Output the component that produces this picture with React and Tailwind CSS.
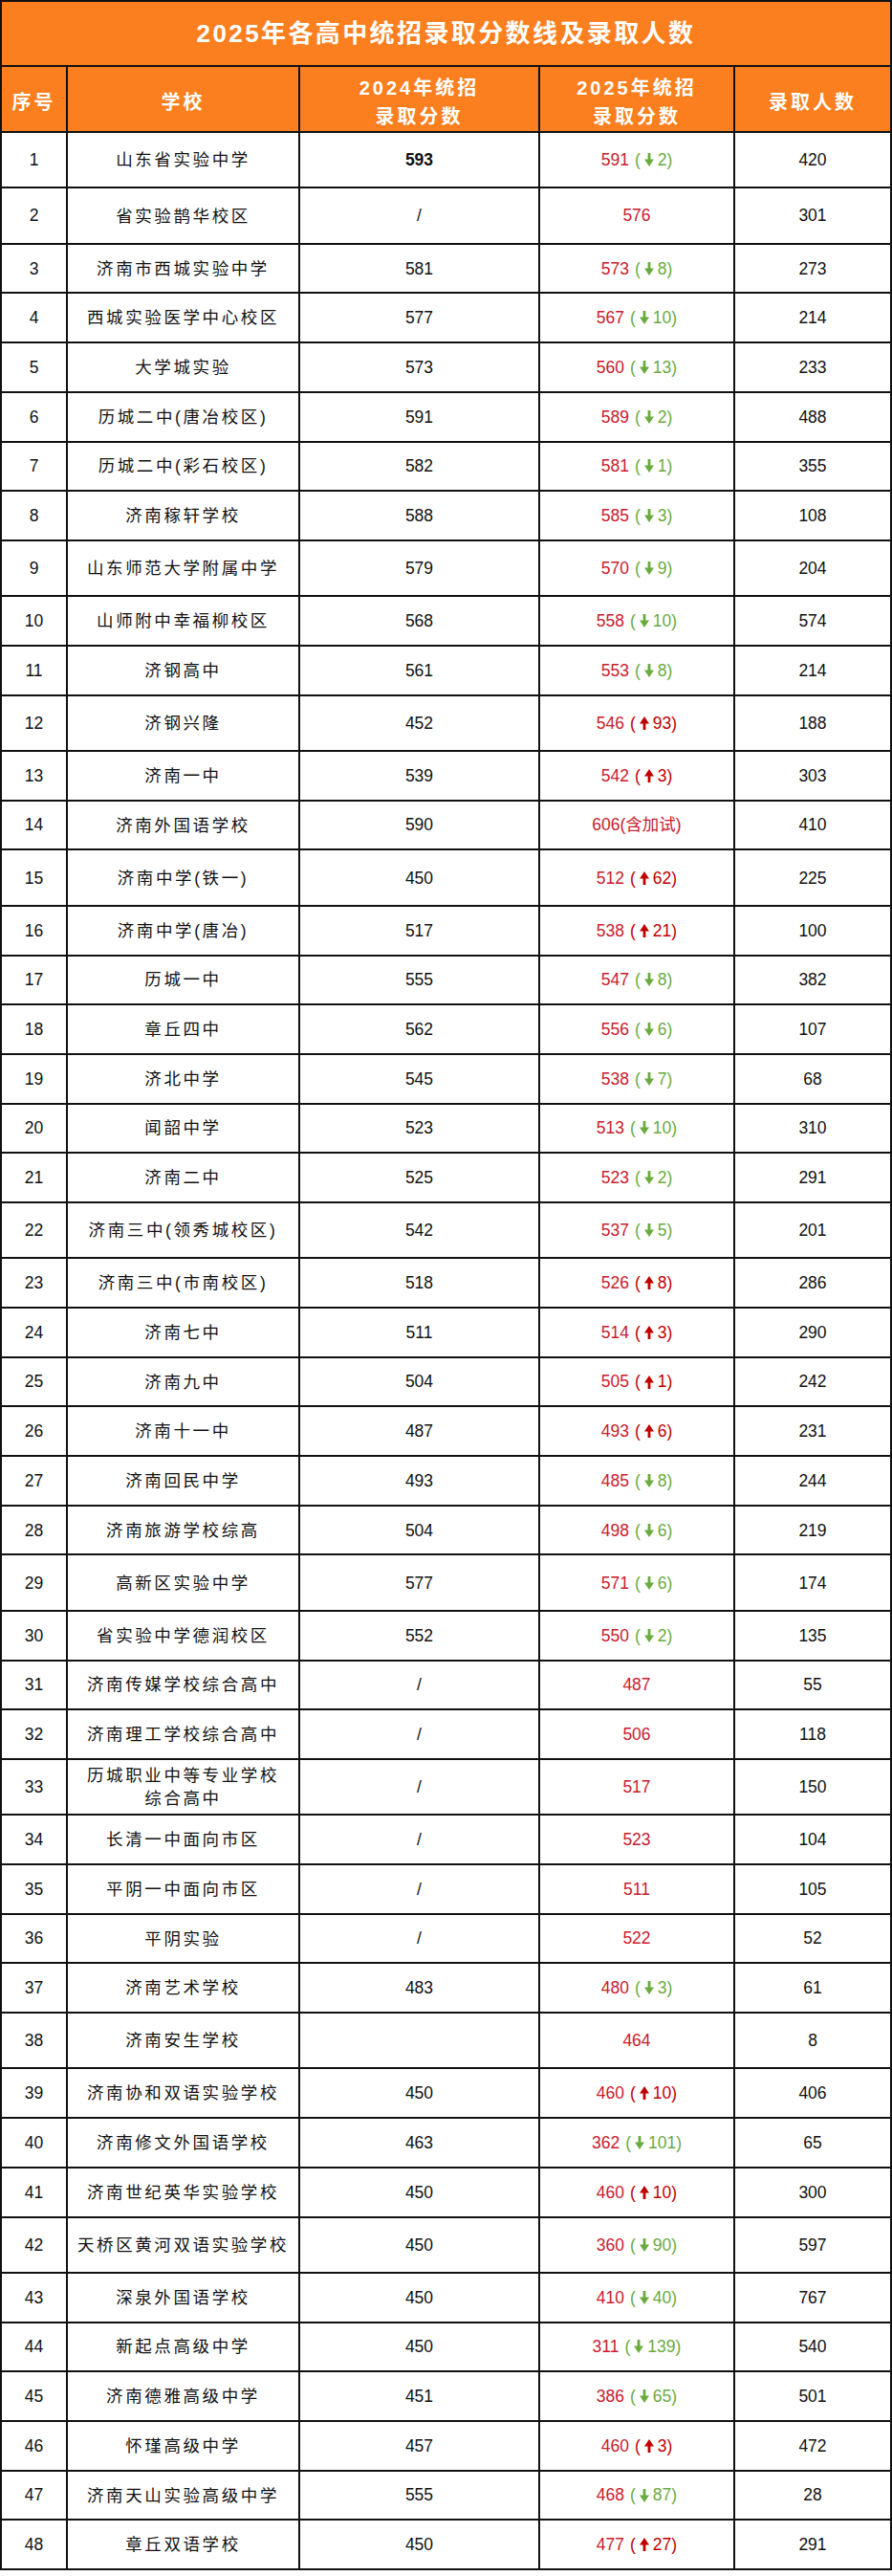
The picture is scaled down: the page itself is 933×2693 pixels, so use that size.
const rows = [
  [1, "山东省实验中学", "593", "591", ["down", "2"], "420"],
  [2, "省实验鹊华校区", "/", "576", null, "301"],
  [3, "济南市西城实验中学", "581", "573", ["down", "8"], "273"],
  [4, "西城实验医学中心校区", "577", "567", ["down", "10"], "214"],
  [5, "大学城实验", "573", "560", ["down", "13"], "233"],
  [6, "历城二中(唐冶校区)", "591", "589", ["down", "2"], "488"],
  [7, "历城二中(彩石校区)", "582", "581", ["down", "1"], "355"],
  [8, "济南稼轩学校", "588", "585", ["down", "3"], "108"],
  [9, "山东师范大学附属中学", "579", "570", ["down", "9"], "204"],
  [10, "山师附中幸福柳校区", "568", "558", ["down", "10"], "574"],
  [11, "济钢高中", "561", "553", ["down", "8"], "214"],
  [12, "济钢兴隆", "452", "546", ["up", "93"], "188"],
  [13, "济南一中", "539", "542", ["up", "3"], "303"],
  [14, "济南外国语学校", "590", "606", ["text", "(含加试)"], "410"],
  [15, "济南中学(铁一)", "450", "512", ["up", "62"], "225"],
  [16, "济南中学(唐冶)", "517", "538", ["up", "21"], "100"],
  [17, "历城一中", "555", "547", ["down", "8"], "382"],
  [18, "章丘四中", "562", "556", ["down", "6"], "107"],
  [19, "济北中学", "545", "538", ["down", "7"], "68"],
  [20, "闻韶中学", "523", "513", ["down", "10"], "310"],
  [21, "济南二中", "525", "523", ["down", "2"], "291"],
  [22, "济南三中(领秀城校区)", "542", "537", ["down", "5"], "201"],
  [23, "济南三中(市南校区)", "518", "526", ["up", "8"], "286"],
  [24, "济南七中", "511", "514", ["up", "3"], "290"],
  [25, "济南九中", "504", "505", ["up", "1"], "242"],
  [26, "济南十一中", "487", "493", ["up", "6"], "231"],
  [27, "济南回民中学", "493", "485", ["down", "8"], "244"],
  [28, "济南旅游学校综高", "504", "498", ["down", "6"], "219"],
  [29, "高新区实验中学", "577", "571", ["down", "6"], "174"],
  [30, "省实验中学德润校区", "552", "550", ["down", "2"], "135"],
  [31, "济南传媒学校综合高中", "/", "487", null, "55"],
  [32, "济南理工学校综合高中", "/", "506", null, "118"],
  [33, "历城职业中等专业学校|综合高中", "/", "517", null, "150"],
  [34, "长清一中面向市区", "/", "523", null, "104"],
  [35, "平阴一中面向市区", "/", "511", null, "105"],
  [36, "平阴实验", "/", "522", null, "52"],
  [37, "济南艺术学校", "483", "480", ["down", "3"], "61"],
  [38, "济南安生学校", "", "464", null, "8"],
  [39, "济南协和双语实验学校", "450", "460", ["up", "10"], "406"],
  [40, "济南修文外国语学校", "463", "362", ["down", "101"], "65"],
  [41, "济南世纪英华实验学校", "450", "460", ["up", "10"], "300"],
  [42, "天桥区黄河双语实验学校", "450", "360", ["down", "90"], "597"],
  [43, "深泉外国语学校", "450", "410", ["down", "40"], "767"],
  [44, "新起点高级中学", "450", "311", ["down", "139"], "540"],
  [45, "济南德雅高级中学", "451", "386", ["down", "65"], "501"],
  [46, "怀瑾高级中学", "457", "460", ["up", "3"], "472"],
  [47, "济南天山实验高级中学", "555", "468", ["down", "87"], "28"],
  [48, "章丘双语学校", "450", "477", ["up", "27"], "291"],
];

// rows drawn a little taller in the source sheet
const tall = [1, 2, 9, 12, 15, 22, 29, 33, 38, 42];

const Arrow = ({ up }) => (
  <svg width="10" height="14" viewBox="0 0 10 14" className={up ? "rotate-180" : ""}>
    <rect x="3.6" y="0" width="2.8" height="8" fill="currentColor" />
    <polygon points="0,6.5 10,6.5 5,14" fill="currentColor" />
  </svg>
);

const Score = ({ value, delta }) => {
  if (!delta) return <span className="text-[#c8202e]">{value}</span>;
  if (delta[0] === "text")
    return (
      <span className="text-[#c8202e]">
        {value}
        {delta[1]}
      </span>
    );
  const up = delta[0] === "up";
  return (
    <span className="inline-flex items-center text-[#c8202e]">
      {value}
      <span className={`ml-[6px] inline-flex items-center ${up ? "text-[#c00000]" : "text-[#6aab3f]"}`}>
        (<span className="mx-[4px] inline-flex">
          <Arrow up={up} />
        </span>
        {delta[1]})
      </span>
    </span>
  );
};

const cell = "flex items-center justify-center border-r-2 border-b-2 border-[#111] text-center";

export default function App() {
  return (
    <div
      className="w-[933px] bg-white pb-[5px] text-[17.5px] text-[#111]"
      style={{ fontFamily: '"Liberation Sans", "Noto Sans CJK SC", sans-serif' }}
    >
      <div className="flex h-[70px] items-center justify-center border-2 border-[#111] bg-[#fb7f1f] text-[26px] font-bold tracking-[2.4px] text-white">
        2025年各高中统招录取分数线及录取人数
      </div>
      <div className="grid grid-cols-[69px_243px_251px_204px_164px] border-l-2 border-[#111]">
        {["序号", "学校", "2024年统招|录取分数", "2025年统招|录取分数", "录取人数"].map((h) => (
          <div
            key={h}
            className={`${cell} h-[69px] flex-col bg-[#fb7f1f] pt-[6px] text-[20px] font-semibold leading-[30px] tracking-[3px] text-white`}
          >
            {h.split("|").map((l) => (
              <span key={l}>{l}</span>
            ))}
          </div>
        ))}
        {rows.map(([no, name, y24, y25, delta, count]) => {
          const h = tall.includes(no) ? "h-[58.4px]" : "h-[51.7px]";
          return [
            <div key={no + "a"} className={`${cell} ${h}`}>
              {no}
            </div>,
            <div key={no + "b"} className={`${cell} ${h} flex-col leading-[24px] tracking-[2.6px]`}>
              {name.split("|").map((l) => (
                <span key={l}>{l}</span>
              ))}
            </div>,
            <div key={no + "c"} className={`${cell} ${h} ${no === 1 ? "font-bold" : ""}`}>
              {y24}
            </div>,
            <div key={no + "d"} className={`${cell} ${h}`}>
              <Score value={y25} delta={delta} />
            </div>,
            <div key={no + "e"} className={`${cell} ${h}`}>
              {count}
            </div>,
          ];
        })}
      </div>
    </div>
  );
}
